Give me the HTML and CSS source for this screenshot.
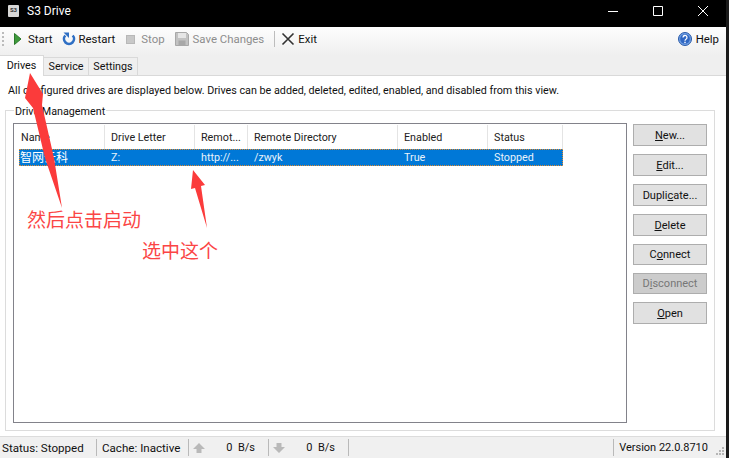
FILE: index.html
```html
<!DOCTYPE html>
<html lang="en">

<head>
  <meta charset="UTF-8">
  <meta name="viewport" content="width=device-width, initial-scale=1.0">
  <title>S3 Drive</title>
  <link rel="stylesheet" href="styles.css">
</head>

<body>
  <div class="window">
    <header class="titlebar">
      <span class="app-icon">S3</span>
      <span class="app-title">S3 Drive</span>
      <div class="window-controls">
        <svg width="12" height="12" viewBox="0 0 12 12"><path d="M1 6.500h10" stroke="#fff" fill="none"/></svg>
        <svg width="12" height="12" viewBox="0 0 12 12"><path d="M1.500 1.500h9v9h-9z" stroke="#fff" fill="none"/></svg>
        <svg width="12" height="12" viewBox="0 0 12 12"><path d="M1 1l10 10M11 1L1 11" stroke="#fff" fill="none"/></svg>
      </div>
    </header>

    <div class="toolbar">
      <span class="grip"></span>
      <span class="tool tool-start">
        <svg width="12" height="14" viewBox="0 0 12 14"><path d="M2.500 1.500l6.500 5.500-6.500 5.500z" fill="#3f9a3c" stroke="#2c7a2c"/></svg>Start
      </span>
      <span class="tool tool-restart">
        <svg width="14" height="14" viewBox="0 0 14 14"><path d="M3.300 3.500a5 5 0 1 0 7.400 0" fill="none" stroke="#2f6fc4" stroke-width="2.600"/><path d="M1.500 .5h5.500v5.500z" fill="#2f6fc4"/></svg>Restart
      </span>
      <span class="tool tool-off tool-stop">
        <svg width="12" height="12" viewBox="0 0 12 12"><rect x="2.500" y="2.500" width="8" height="8" fill="#c8c8c8" stroke="#b8b8b8"/></svg>Stop
      </span>
      <span class="tool tool-off tool-save">
        <svg width="14" height="14" viewBox="0 0 14 14"><path d="M.5.5h11l2 2v11H.5z" fill="#c2c2c2" stroke="#a8a8a8"/><rect x="3" y="1" width="8" height="5" fill="#e6e6e6"/><rect x="3.500" y="8.500" width="7" height="5" fill="#a8a8a8"/></svg>Save Changes
      </span>
      <span class="tool-sep"></span>
      <span class="tool tool-exit">
        <svg width="14" height="14" viewBox="0 0 14 14"><path d="M1.500 1.500l11 11M12.500 1.500l-11 11" stroke="#333" stroke-width="1.600" fill="none"/></svg>Exit
      </span>
      <span class="tool tool-help">
        <svg width="14" height="14" viewBox="0 0 14 14"><circle cx="7" cy="7" r="6.500" fill="#6f9fe4" stroke="#2a5aa8"/><circle cx="7" cy="7" r="4.800" fill="#2f66c2"/><path d="M5 5.500a2 2 0 1 1 3 1.700c-.7.400-1 .8-1 1.500" fill="none" stroke="#fff" stroke-width="1.300"/><rect x="6.300" y="9.700" width="1.400" height="1.400" fill="#fff"/></svg>Help
      </span>
    </div>

    <div class="tabs">
      <span class="tab tab-active">Drives</span>
      <span class="tab tab-service">Service</span>
      <span class="tab tab-settings">Settings</span>
    </div>

    <main class="panel">
      <p class="intro">All configured drives are displayed below. Drives can be added, deleted, edited, enabled, and disabled from this view.</p>
      <section class="group">
        <span class="group-label">Drive Management</span>
        <div class="list">
          <div class="list-row list-head">
            <span class="col col-name">Name</span>
            <span class="col col-letter">Drive Letter</span>
            <span class="col col-remote">Remot...</span>
            <span class="col col-dir">Remote Directory</span>
            <span class="col col-enabled">Enabled</span>
            <span class="col col-status">Status</span>
          </div>
          <div class="list-row list-selected">
            <span class="col col-name cjk">智网云科</span>
            <span class="col col-letter">Z:</span>
            <span class="col col-remote">http://...</span>
            <span class="col col-dir">/zwyk</span>
            <span class="col col-enabled">True</span>
            <span class="col col-status">Stopped</span>
          </div>
        </div>
        <div class="actions">
          <button class="btn"><u>N</u>ew...</button>
          <button class="btn"><u>E</u>dit...</button>
          <button class="btn">Dupli<u>c</u>ate...</button>
          <button class="btn"><u>D</u>elete</button>
          <button class="btn btn-short">C<u>o</u>nnect</button>
          <button class="btn btn-short btn-off">D<u>i</u>sconnect</button>
          <button class="btn"><u>O</u>pen</button>
        </div>
      </section>
    </main>

    <footer class="statusbar">
      <span class="stat stat-status">Status: Stopped</span>
      <span class="stat stat-cache">Cache: Inactive</span>
      <span class="stat stat-rate">
        <svg width="14" height="12" viewBox="0 0 14 12"><path d="M7 1l6 6H9.500v4h-5V7H1z" fill="#b9b9b9"/></svg><span class="rate">0&nbsp; B/s</span>
      </span>
      <span class="stat stat-rate">
        <svg width="14" height="12" viewBox="0 0 14 12"><path d="M7 11L1 5h3.500V1h5v4H13z" fill="#b9b9b9"/></svg><span class="rate">0&nbsp; B/s</span>
      </span>
      <span class="stat stat-spacer"></span>
      <span class="stat stat-version">Version 22.0.8710</span>
      <svg class="resize-grip" width="10" height="10" viewBox="0 0 10 10"><path d="M7 1h2v2H7zM4 4h2v2H4zM7 4h2v2H7zM1 7h2v2H1zM4 7h2v2H4zM7 7h2v2H7z" fill="#b5b5b5"/></svg>
    </footer>
  </div>

  <!-- red annotations drawn over the screenshot -->
  <svg class="arrow" width="729" height="458" viewBox="0 0 729 458">
    <path d="M30 73L43 94 42 105 54 158 62 208 45 158 33 108 25 98z" fill="#fb3b3b"/>
    <path d="M193 170L205 185 201 186 207 228 195 188 191 189z" fill="#fb3b3b"/>
  </svg>
  <span class="note note-start">然后点击启动</span>
  <span class="note note-select">选中这个</span>
</body>

</html>
```

FILE: styles.css
```css
* {
  box-sizing: border-box;
}

html,
body {
  margin: 0;
  height: 100%;
  overflow: hidden;
  background: #1a1a1a;
}

body {
  font-family: Roboto, 'Noto Sans CJK SC', sans-serif;
  font-size: 10.75px;
  color: #111;
}

.window {
  display: flex;
  flex-direction: column;
  width: 726px;
  height: 458px;
  background: #f0f0f0;
}

/* title bar */
.titlebar {
  display: flex;
  align-items: center;
  flex: 0 0 27px;
  padding: 0 0 5px 8px;
  background: #000;
  color: #fff;
  font-size: 12px;
}

.app-icon {
  width: 11px;
  height: 12px;
  margin-right: 8px;
  background: #d8d8d8;
  border-radius: 1px;
  color: #333;
  font-size: 6px;
  font-weight: bold;
  line-height: 10px;
  text-align: center;
}

.window-controls {
  display: flex;
  gap: 33px;
  align-items: center;
  margin-left: auto;
  padding-right: 17px;
}

/* toolbar */
.toolbar {
  display: flex;
  align-items: center;
  flex: 0 0 28px;
  padding: 0 7px 4px 2px;
  background: linear-gradient(#fdfdfd, #efefef);
  font-size: 11.4px;
}

.grip {
  width: 2px;
  height: 14px;
  margin-right: 8px;
  background: repeating-linear-gradient(#bbb 0 2px, transparent 2px 4px);
}

.tool {
  display: flex;
  gap: 4px;
  align-items: center;
}

.tool-restart {
  gap: 3px;
  margin-left: 9px;
}

.tool-stop {
  gap: 5px;
  margin-left: 9px;
}

.tool-save {
  margin-left: 10px;
}

.tool-exit {
  gap: 3px;
}

.tool-off {
  color: #8d8d8d;
}

.tool-sep {
  width: 1px;
  height: 16px;
  margin: 0 6px 0 10px;
  background: #bdbdbd;
}

.tool-help {
  margin-left: auto;
}

/* tabs */
.tabs {
  display: flex;
  flex: 0 0 21px;
  align-items: flex-end;
  border-bottom: 1px solid #d9d9d9;
  background: #efefef;
}

.tab {
  height: 18px;
  padding: 2px 0 0;
  border: 1px solid #d9d9d9;
  border-bottom: 0;
  border-left: 0;
  text-align: center;
}

.tab-active {
  position: relative;
  width: 44px;
  height: 21px;
  margin-bottom: -1px;
  padding-top: 3px;
  background: #fff;
}

.tab-service {
  width: 45px;
}

.tab-settings {
  width: 49px;
}

/* main panel */
.panel {
  display: flex;
  flex-direction: column;
  flex: 1;
  padding: 0 11px 5px 5px;
  border-bottom: 1px solid #dcdcdc;
  background: #fff;
}

.intro {
  margin: 7px 0 0 3px;
  line-height: 15px;
}

.group {
  position: relative;
  display: flex;
  flex: 1;
  gap: 6px;
  margin-top: 12px;
  padding: 12px 7px 7px;
  border: 1px solid #dcdcdc;
}

.group-label {
  position: absolute;
  top: -7px;
  left: 8px;
  padding: 0 1px;
  background: #fff;
  line-height: 15px;
}

.list {
  flex: 1;
  padding: 1px 0 0 5px;
  border: 1px solid #82828a;
  background: #fff;
}

.list-row {
  display: flex;
  width: 544px;
}

.list-head {
  height: 24px;
  color: #222;
}

.list-head .col {
  padding-top: 1px;
  border-right: 1px solid #e4e4e4;
  line-height: 23px;
}

.list-selected {
  height: 17px;
  outline: 1px dotted #e08a30;
  outline-offset: -1px;
  background: #0078d7;
  color: #e9f3fb;
}

.list-selected .col {
  padding-top: 1px;
  line-height: 16px;
}

.col {
  padding-left: 6px;
  white-space: nowrap;
}

.col-name {
  width: 86px;
  padding-left: 2px;
}

.col-letter {
  width: 90px;
}

.col-remote {
  width: 53px;
}

.col-dir {
  width: 150px;
}

.col-enabled {
  width: 90px;
}

.col-status {
  width: 75px;
}

.list-selected .cjk {
  padding-left: 1px;
  font-size: 12px;
  color: #fff;
}

/* buttons */
.actions {
  display: flex;
  flex-direction: column;
  gap: 8px;
  flex: 0 0 74px;
  padding-top: 1px;
}

.btn {
  height: 22px;
  padding: 0;
  border: 1px solid #adadad;
  background: #e1e1e1;
  color: #111;
  font: inherit;
  font-size: 11px;
}

.btn-short {
  height: 21px;
}

.btn-off {
  background: #cccccc;
  color: #777;
}

/* status bar */
.statusbar {
  display: flex;
  align-items: center;
  flex: 0 0 21px;
  padding-right: 1px;
  background: #f0f0f0;
  font-size: 11px;
}

.stat {
  display: flex;
  align-items: center;
  height: 17px;
  padding-left: 5px;
  border-right: 1px solid #b9b9b9;
}

.stat-status {
  width: 97px;
  padding-left: 2px;
  font-size: 11.6px;
}

.stat-cache {
  width: 92px;
  font-size: 11.6px;
}

.stat-rate {
  width: 80px;
  padding-left: 3px;
}

.rate {
  margin-left: auto;
  padding-right: 13px;
}

.stat-spacer {
  flex: 1;
}

.stat-version {
  padding-right: 7px;
  border-right: 0;
}

.resize-grip {
  align-self: flex-end;
  margin-bottom: 2px;
}

/* annotations */
.arrow {
  position: absolute;
  top: 0;
  left: 0;
}

.note {
  position: absolute;
  color: #fb4545;
  font-family: 'Noto Sans CJK SC', sans-serif;
  font-size: 19px;
  line-height: 24px;
}

.note-start {
  top: 207px;
  left: 27px;
}

.note-select {
  top: 238px;
  left: 142px;
}
```
